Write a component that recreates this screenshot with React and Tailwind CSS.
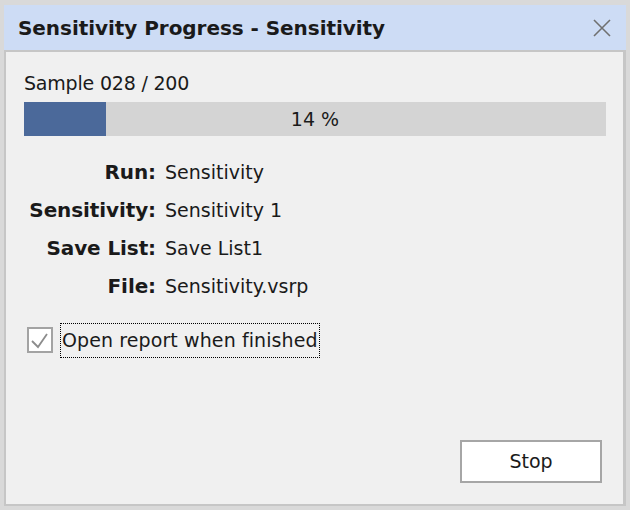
import React from "react";

export default function App() {
  const font = { fontFamily: '"DejaVu Sans", Verdana, sans-serif' };
  const rows = [
    ["Run:", "Sensitivity"],
    ["Sensitivity:", "Sensitivity 1"],
    ["Save List:", "Save List1"],
    ["File:", "Sensitivity.vsrp"],
  ];
  return (
    <div
      className="w-[630px] h-[510px] bg-[#d9d9d9] pt-[5px] pl-[4px] pr-[4px] pb-[4px] flex flex-col text-[#1a1a1a]"
      style={font}
    >
      <div className="h-[45px] shrink-0 bg-[#cddcf5] flex items-center justify-between pl-[14px] pr-[15px]">
        <span className="text-[20px] font-bold leading-none tracking-[-0.05px]">
          Sensitivity Progress - Sensitivity
        </span>
        <svg width="18" height="18" viewBox="0 0 18 18" className="block">
          <path d="M1 1 L17 17 M17 1 L1 17" stroke="#707070" strokeWidth="1.6" />
        </svg>
      </div>
      <div className="flex-1 flex flex-col bg-[#f0f0f0] border-t-2 border-l-2 border-r-[3px] border-b-2 border-[#c6c6c6] pl-[18px] pr-[17px] pt-[20px] pb-[21px]">
        <div className="text-[19px] leading-[22px] tracking-[-0.2px]">Sample 028 / 200</div>
        <div className="relative mt-[8px] h-[34px] bg-[#d4d4d4] flex items-center justify-center">
          <div className="absolute left-0 top-0 h-full w-[82px] bg-[#4b699a]" />
          <span className="relative text-[19px] leading-none">14 %</span>
        </div>
        <div className="mt-[17px] grid grid-cols-[132px_1fr] gap-x-[9px]">
          {rows.map(([l, v]) => (
            <React.Fragment key={l}>
              <div className="h-[38px] leading-[38px] text-right font-bold text-[20px] tracking-[-0.1px]">{l}</div>
              <div className="h-[38px] leading-[38px] text-[19px]">{v}</div>
            </React.Fragment>
          ))}
        </div>
        <div className="mt-[17px] h-[36px] flex items-center pl-[3px]">
          <div className="w-[26px] h-[26px] border-2 border-[#a3a3a3] bg-white flex items-center justify-center">
            <svg width="22" height="22" viewBox="0 0 22 22" className="block">
              <path d="M3 12 L9 18 L18 5" stroke="#8c8c8c" strokeWidth="1.8" fill="none" />
            </svg>
          </div>
          <div className="ml-[7px] h-[35px] border border-dotted border-black px-[1px] flex items-center text-[19px] tracking-[0.1px]">
            Open report when finished
          </div>
        </div>
        <div className="mt-auto flex justify-end pr-[4px]">
          <button className="w-[142px] h-[43px] bg-white border-2 border-[#a6a6a6] text-[19px] flex items-center justify-center">
            Stop
          </button>
        </div>
      </div>
    </div>
  );
}
